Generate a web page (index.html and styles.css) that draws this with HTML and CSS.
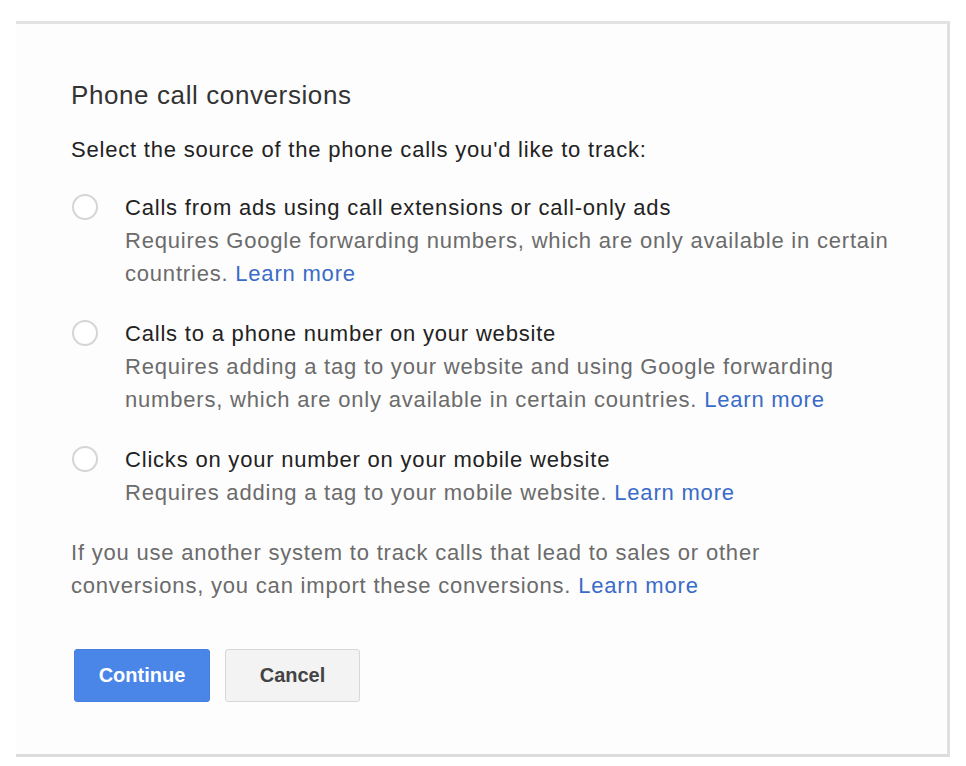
FILE: index.html
```html
<!DOCTYPE html>
<html lang="en">
    <head>
        <meta charset="utf-8" />
        <title>Phone call conversions</title>
        <link rel="stylesheet" href="styles.css">
    </head>
    <body>
        <main class="dialog">
            <h2 class="title">Phone call conversions</h2>
            <p class="intro">Select the source of the phone calls you'd like to track:</p>

            <label class="option">
                <span class="radio"></span>
                <span class="option-text">
                    <span class="option-title">Calls from ads using call extensions or call-only ads</span>
                    <span class="option-desc">Requires Google forwarding numbers, which are only available in certain countries. <a href="#" class="link">Learn more</a></span>
                </span>
            </label>

            <label class="option">
                <span class="radio"></span>
                <span class="option-text">
                    <span class="option-title">Calls to a phone number on your website</span>
                    <span class="option-desc">Requires adding a tag to your website and using Google forwarding numbers, which are only available in certain countries. <a href="#" class="link">Learn more</a></span>
                </span>
            </label>

            <label class="option">
                <span class="radio"></span>
                <span class="option-text">
                    <span class="option-title">Clicks on your number on your mobile website</span>
                    <span class="option-desc">Requires adding a tag to your mobile website. <a href="#" class="link">Learn more</a></span>
                </span>
            </label>

            <p class="note">If you use another system to track calls that lead to sales or other conversions, you can import these conversions. <a href="#" class="link">Learn more</a></p>

            <div class="actions">
                <button class="btn btn-primary">Continue</button>
                <button class="btn">Cancel</button>
            </div>
        </main>
    </body>
</html>
```

FILE: styles.css
```css
* {
    margin: 0;
    padding: 0;
    box-sizing: border-box;
    font-family: "Liberation Sans", Arial, sans-serif;
}

body {
    background: #ffffff;
}

.dialog {
    width: 934px;
    height: 736px;
    margin: 21px 0 0 16px;
    padding: 56px 55px 0 55px;
    background: #fdfdfd;
    border-top: 3px solid #e2e2e2;
    border-right: 3px solid #e0e0e0;
    border-bottom: 3px solid #dcdcdc;
}

.title {
    font-size: 26px;
    font-weight: normal;
    letter-spacing: 0.6px;
    color: #333333;
    line-height: 30px;
}

.intro {
    margin-top: 25px;
    font-size: 22px;
    letter-spacing: 0.8px;
    line-height: 30px;
    color: #222222;
}

.option {
    display: flex;
    gap: 27px;
    margin-top: 27px;
    cursor: pointer;
}

.intro + .option {
    margin-top: 26px;
}

.radio {
    flex: none;
    width: 26px;
    height: 26px;
    margin-top: 3px;
    margin-left: 1px;
    border: 2px solid #d5d5d5;
    border-radius: 50%;
    background: #ffffff;
}

.option-text {
    display: flex;
    flex-direction: column;
    font-size: 22px;
    letter-spacing: 0.8px;
    line-height: 33px;
}

.option-title {
    color: #222222;
}

.option-desc {
    color: #6b6b6b;
}

.link {
    color: #3a6bc7;
    text-decoration: none;
}

.note {
    margin-top: 27px;
    font-size: 22px;
    letter-spacing: 0.8px;
    line-height: 33px;
    color: #6b6b6b;
    max-width: 760px;
}

.actions {
    display: flex;
    gap: 15px;
    margin-top: 47px;
    padding-left: 3px;
}

.btn {
    width: 135px;
    height: 53px;
    font-size: 20px;
    font-weight: bold;
    color: #444444;
    background: #f3f3f3;
    border: 1px solid #d8d8d8;
    border-radius: 3px;
    cursor: pointer;
}

.btn-primary {
    width: 136px;
    color: #ffffff;
    background: #4a86e8;
    border-color: #4580e0;
}
```
